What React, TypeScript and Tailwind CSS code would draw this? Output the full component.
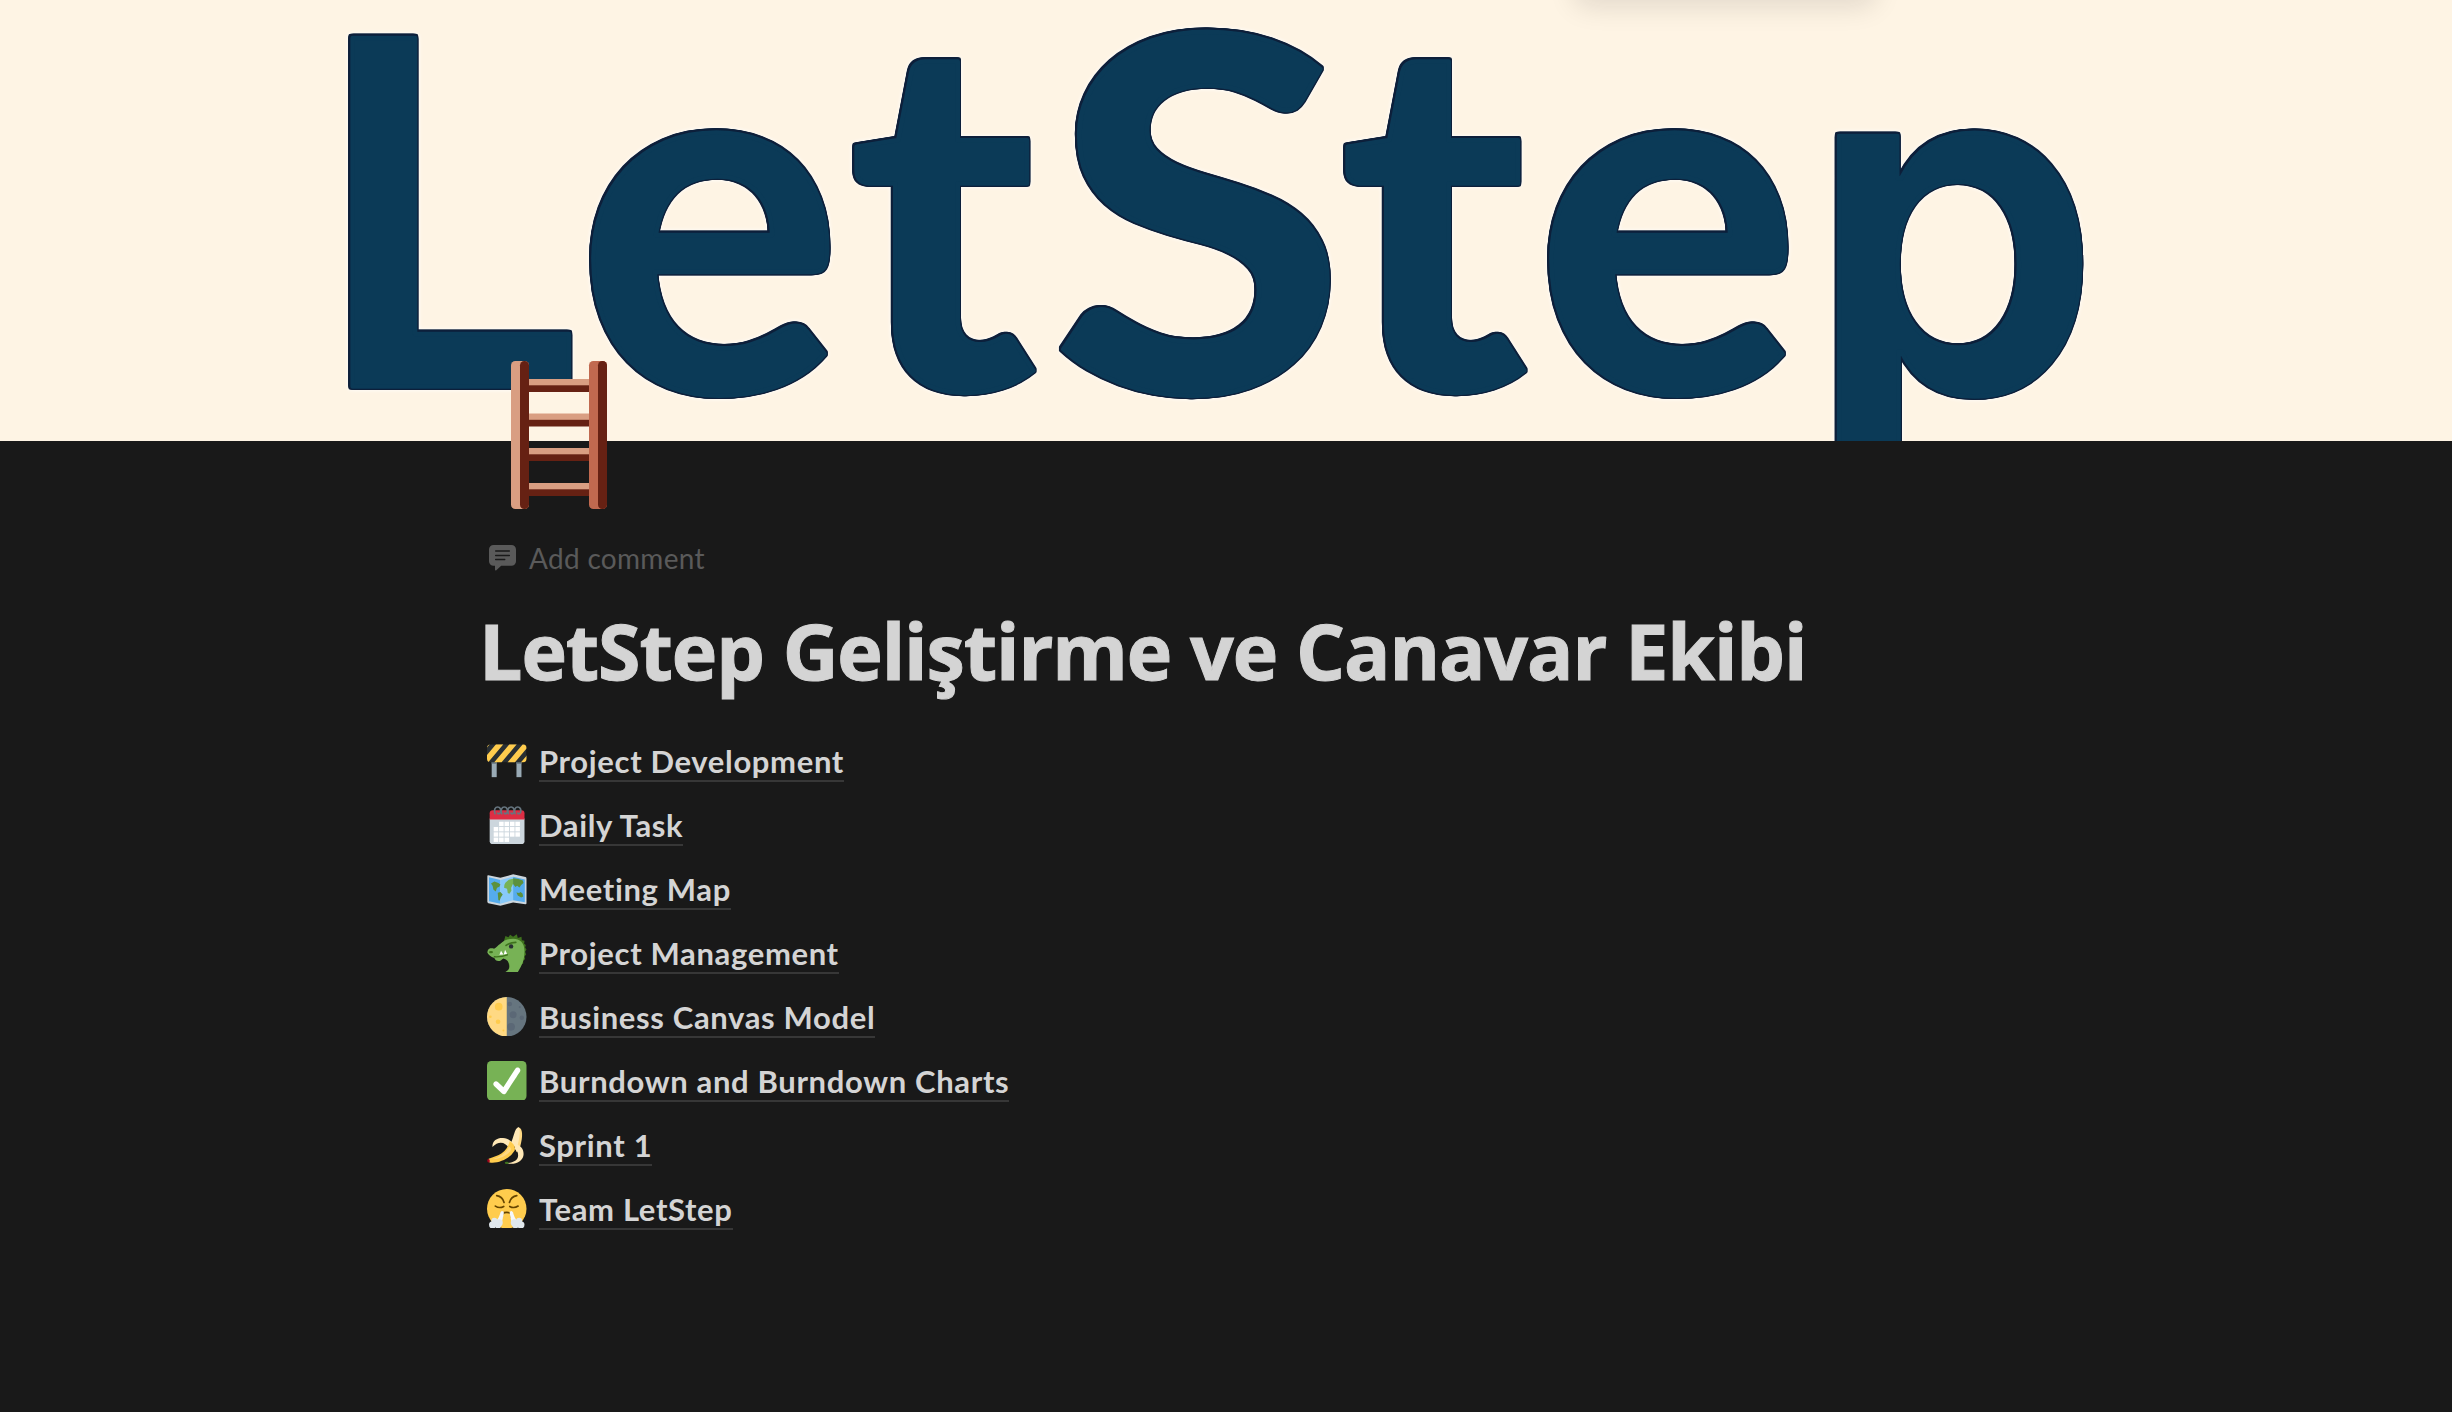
import React from "react";

function Ladder() {
  const rungs = [18, 52.5, 87, 122];
  return (
    <svg className="block h-[148px] w-[96px]" viewBox="0 0 96 148">
      {rungs.map((y) => (
        <g key={y}>
          <rect x="14" y={y} width="68" height="7" fill="#D99E82" />
          <rect x="14" y={y + 6.3} width="68" height="6.7" fill="#662113" />
        </g>
      ))}
      <rect x="0" y="0" width="18" height="148" rx="4.3" fill="#D99E82" />
      <rect x="9" y="0" width="9" height="148" rx="4.3" fill="#662113" />
      <rect x="78" y="0" width="18" height="148" rx="4.3" fill="#C1694F" />
      <rect x="87" y="0" width="9" height="148" rx="4.3" fill="#662113" />
    </svg>
  );
}

function Emoji({ children }: { children: React.ReactNode }) {
  return (
    <svg className="mt-px block size-[39.5px] shrink-0" viewBox="0 0 118 118">
      {children}
    </svg>
  );
}

const Construction = () => (
  <Emoji>
    <rect x="14" y="60" width="15" height="48" fill="#99AAB5" />
    <rect x="88" y="60" width="15" height="48" fill="#99AAB5" />
    <rect x="14" y="60" width="15" height="8" fill="#66757F" />
    <rect x="88" y="60" width="15" height="8" fill="#66757F" />
    <clipPath id="board"><rect x="0" y="10" width="118" height="54" rx="12" /></clipPath>
    <g clipPath="url(#board)">
      <rect x="0" y="10" width="118" height="54" fill="#292F33" />
      <path fill="#FFCC4D" d="M-59 64h22L8 10h-22zM-19 64h22L49 10H27zM21 64h22l46-54H67zM61 64h22l46-54h-22zM101 64h22l46-54h-22z" />
    </g>
  </Emoji>
);

const cells: number[][] = [[1, 2, 3, 4], [0, 1, 2, 3, 4], [0, 1, 2, 3, 4], [0, 1, 2]];
const Calendar = () => (
  <Emoji>
    <path fill="#CCD6DD" d="M8 40h104v68a9 9 0 0 1-9 9H17a9 9 0 0 1-9-9z" />
    <path fill="#DD2E44" d="M8 43V25a9 9 0 0 1 9-9h86a9 9 0 0 1 9 9v18z" />
    {cells.map((row, r) => row.map((c) => <rect key={r + "-" + c} x={20 + c * 16.2} y={50 + r * 15.8} width="13.5" height="13" fill="#fff" />))}
    {[27, 47, 67, 87].map((x) => (
      <path key={x} d={`M${x - 3} 26C${x - 8} 14 ${x - 2} 6 ${x + 5} 6c7 0 10 7 9 14c-1 6-7 8-9 4`} fill="none" stroke="#66757F" strokeWidth="5" strokeLinecap="round" />
    ))}
  </Emoji>
);

const WorldMap = () => (
  <Emoji>
    <path fill="#CCD6DD" d="M4 19Q1 18 1 22V98q0 3 3 4l36 8 38-10 37 5q3 0 3-3V29q0-4-3-5L78 16 40 26z" />
    <path fill="#55ACEE" d="M6 25l34 8v71L6 96z" />
    <path fill="#88C9F9" d="M40 33l38-10v70l-38 11z" />
    <path fill="#55ACEE" d="M78 23l35 8v68l-35-6z" />
    <path fill="#5C913B" d="M12 43l10-6 12 5 6 4-3 7-7 3-4 11-7-6-2-10zM32 71l8-2 7 7-6 9-3 9-4-1-1-11z" />
    <path fill="#77B255" d="M55 41l10-9 13-3v14l-6 14 1 8-6 9-5-2-2-13-9-3 1-9z" />
    <path fill="#5C913B" d="M78 28l16 2 13 4 2 8-7 6-5 7-7-5-5 4-7-9zM88 70l8 2 4-3 6 4 2 9-6 3-10-6z" />
  </Emoji>
);

const Dragon = () => (
  <Emoji>
    <path fill="#3E721D" d="M50 26l5-17 9 4 5-8 9 6 11-7 3 11 11-4 1 11 8 1-1 9 5 4-2 7 4 6-4 7 3 8-5 6 2 8-6 5 0 8-7 4-2 7-5 6-4 7H70z" />
    <path fill="#77B255" d="M2 53c3-8 12-8 19-6 7-4 11-10 19-15C50 22 62 17 78 17c20 0 34 12 34 36 0 26-6 42-20 64H54c10-5 14-12 13-21-1-10-7-17-18-20-5 3-8 8-15 8-6 0-10-4-12-9C11 72 3 63 1 58z" />
    <path fill="none" stroke="#3E721D" strokeWidth="4" strokeLinecap="round" d="M22 71q22 1 39-6" />
    <path fill="none" stroke="#3E721D" strokeWidth="5" strokeLinecap="round" d="M57 37q12-9 29-9" />
    <ellipse cx="12" cy="57" rx="6" ry="3.5" fill="#3E721D" />
    <circle cx="72" cy="40" r="6.5" fill="#292F33" />
    <path fill="#fff" d="M37 65l5-12 7 11zM50 64l4-14 6 12z" />
  </Emoji>
);

const Moon = () => (
  <Emoji>
    <circle cx="59" cy="59" r="59" fill="#66757F" />
    <path fill="#FFD983" d="M59 0a59 59 0 0 0 0 118z" />
    <g fill="#FFCC4D">
      <circle cx="35" cy="29" r="11.5" />
      <circle cx="33" cy="74" r="7" />
      <circle cx="10" cy="59" r="4" />
      <circle cx="49" cy="100" r="3" />
    </g>
    <g fill="#5B6876">
      <circle cx="68" cy="21" r="7" />
      <circle cx="78" cy="53" r="10.5" />
      <circle cx="104" cy="62" r="6.5" />
      <circle cx="72" cy="89" r="11.5" />
      <circle cx="98" cy="30" r="3.3" />
    </g>
  </Emoji>
);

const Check = () => (
  <svg className="mt-px block size-[39.5px] shrink-0" viewBox="0 0 36 36">
    <rect width="36" height="36" rx="4" fill="#77B255" />
    <path fill="#fff" d="M29.28 6.362c-1.156-.751-2.704-.422-3.458.736L14.936 23.877l-5.029-4.65c-1.014-.938-2.596-.875-3.533.138-.937 1.014-.875 2.596.139 3.533l7.209 6.666c.48.445 1.09.665 1.696.665.673 0 1.534-.282 2.099-1.139.332-.506 12.5-19.27 12.5-19.27.751-1.159.421-2.707-.737-3.458z" />
  </svg>
);

const Banana = () => (
  <Emoji>
    <path fill="#FFD983" d="M81 60C84 38 84 10 94 7c14 2 13 30 6 54-2 10-6 16-12 20z" />
    <path fill="#FFE8B6" d="M70 56C80 40 82 9 94 7c7 4 4 34-5 62z" />
    <path fill="#FFE8B6" d="M16 66C16 45 32 38 48 39c14 1 24 8 31 18l-14 12C55 50 34 46 16 66z" />
    <path fill="#FFE8B6" d="M88 58c14 4 23 16 21 32-3 20-26 30-52 24 20-1 36-8 36-24 0-9-4-14-11-19z" />
    <path fill="#FFCC4D" d="M68 48c14 9 20 23 12 32-14 22-48 36-72 32-5-2-6-8-3-11 28-9 55-18 63-53z" />
    <path fill="#FFD983" d="M66 65c6 2 7 8 3 14-10 13-32 23-51 23 16-6 38-15 48-37z" />
    <path fill="#A0041E" d="M1 104c2-4 6-2 7 1s0 6-3 7-5-5-4-8z" />
    <ellipse cx="59" cy="113" rx="6" ry="3.5" fill="#3E721D" />
  </Emoji>
);

const Huffing = () => (
  <Emoji>
    <circle cx="59" cy="59" r="59" fill="#FFCC4D" />
    <g fill="none" stroke="#664500" strokeWidth="5" strokeLinecap="round">
      <path d="M29 20q17 3 22 20M89 20q-17 3-22 20" />
      <path d="M25 51q12 8 25 1M68 52q12 7 25-1" />
      <path d="M45 84q-2-14 14-14t14 14" />
    </g>
    <path fill="#F5F8FA" d="M44 66c5 0 7 3 6 8L45 98H25c8-6 14-22 15-28zM74 66c-5 0-7 3-6 8l5 24h20c-8-6-14-22-15-28z" />
    <g fill="#E1E8ED">
      <circle cx="17" cy="107" r="11" /><circle cx="22" cy="95" r="9" /><circle cx="36" cy="101" r="11" /><circle cx="33" cy="109" r="9" />
      <circle cx="101" cy="107" r="11" /><circle cx="96" cy="95" r="9" /><circle cx="82" cy="101" r="11" /><circle cx="85" cy="109" r="9" />
    </g>
  </Emoji>
);

const pages = [
  { label: "Project Development", Icon: Construction },
  { label: "Daily Task", Icon: Calendar },
  { label: "Meeting Map", Icon: WorldMap },
  { label: "Project Management", Icon: Dragon },
  { label: "Business Canvas Model", Icon: Moon },
  { label: "Burndown and Burndown Charts", Icon: Check },
  { label: "Sprint 1", Icon: Banana },
  { label: "Team LetStep", Icon: Huffing },
];

export default function App() {
  return (
    <div className="min-h-[1412px] w-full bg-[#191919] font-['Lato',sans-serif] text-[#d4d4d4]">
      <header className="relative h-[441px] w-full overflow-hidden bg-[#fef4e4]">
        <svg className="block h-[441px] w-[2452px]" viewBox="0 0 2452 441">
          <text
            className="font-bold [filter:drop-shadow(1.5px_0_0_#0d1f3a)_drop-shadow(-1.5px_0_0_#0d1f3a)_drop-shadow(0_1.5px_0_#0d1f3a)_drop-shadow(0_-1.5px_0_#0d1f3a)_drop-shadow(0_0_2px_#ffffff)]"
            fill="#0b3a57"
            stroke="#0b3a57"
            strokeWidth="4.5"
            strokeLinejoin="round"
          >
            <tspan x="317.5" y="386.500" className="font-['Inter',sans-serif] text-[479px] font-semibold">L</tspan>
            <tspan x="577" y="392" className="font-['Lato',sans-serif] text-[498px]">e</tspan>
            <tspan x="848" y="389" textLength="188" lengthAdjust="spacingAndGlyphs" className="font-['Lato',sans-serif] text-[489px]">t</tspan>
            <tspan x="1051" y="392" textLength="296" lengthAdjust="spacingAndGlyphs" className="font-['Lato',sans-serif] text-[493px]">S</tspan>
            <tspan x="1339" y="389" textLength="188" lengthAdjust="spacingAndGlyphs" className="font-['Lato',sans-serif] text-[489px]">t</tspan>
            <tspan x="1535" y="392" className="font-['Lato',sans-serif] text-[498px]">e</tspan>
            <tspan x="1807.5" y="392" className="font-['Inter',sans-serif] text-[469px] font-semibold">p</tspan>
          </text>
        </svg>
        <div className="absolute -top-10 left-[1577px] h-10 w-[296px] rounded-lg shadow-[0_4px_28px_2px_rgba(15,15,15,0.12)]" />
      </header>

      <main className="ml-[480px] flex w-[1492px] flex-col items-start">
        <div className="relative -mt-20 ml-[31px]"><Ladder /></div>

        <div className="mt-[29px] ml-[9px] flex h-10 items-center gap-[13px] text-[#5a5a5a]">
          <svg className="block h-[26px] w-[27px]" viewBox="0 0 27 26">
            <path fill="#5a5a5a" d="M4.5 0h18A4.5 4.5 0 0 1 27 4.5v11.700a4.500 4.500 0 0 1-4.500 4.500H12.200L7.300 25.200c-.5.500-1.300.200-1.300-.5v-4H4.500A4.500 4.500 0 0 1 0 16.200V4.500A4.500 4.500 0 0 1 4.500 0z" />
            <path stroke="#191919" strokeWidth="1.500" strokeLinecap="round" d="M6.700 6h13.600M6.700 10.400h13.600M6.700 14.600h9" />
          </svg>
          <span className="text-[28px] leading-10 tracking-[0.3px]">Add comment</span>
        </div>

        <h1 className="mt-[25px] -ml-px whitespace-nowrap font-['Open_Sans',sans-serif] text-[77px] leading-[96px] font-bold tracking-[-1.1px] [-webkit-text-stroke:1px_#d4d4d4]">
          LetStep Geliştirme ve Canavar Ekibi
        </h1>

        <nav className="mt-[29px] ml-[7px] flex flex-col items-start">
          {pages.map(({ label, Icon }) => (
            <a key={label} className="flex h-16 items-center gap-[12.5px]">
              <Icon />
              <span className="mt-1 border-b-2 border-[#373737] text-[31px] leading-[38px] font-bold tracking-[0.65px] whitespace-nowrap">
                {label}
              </span>
            </a>
          ))}
        </nav>
      </main>
    </div>
  );
}
